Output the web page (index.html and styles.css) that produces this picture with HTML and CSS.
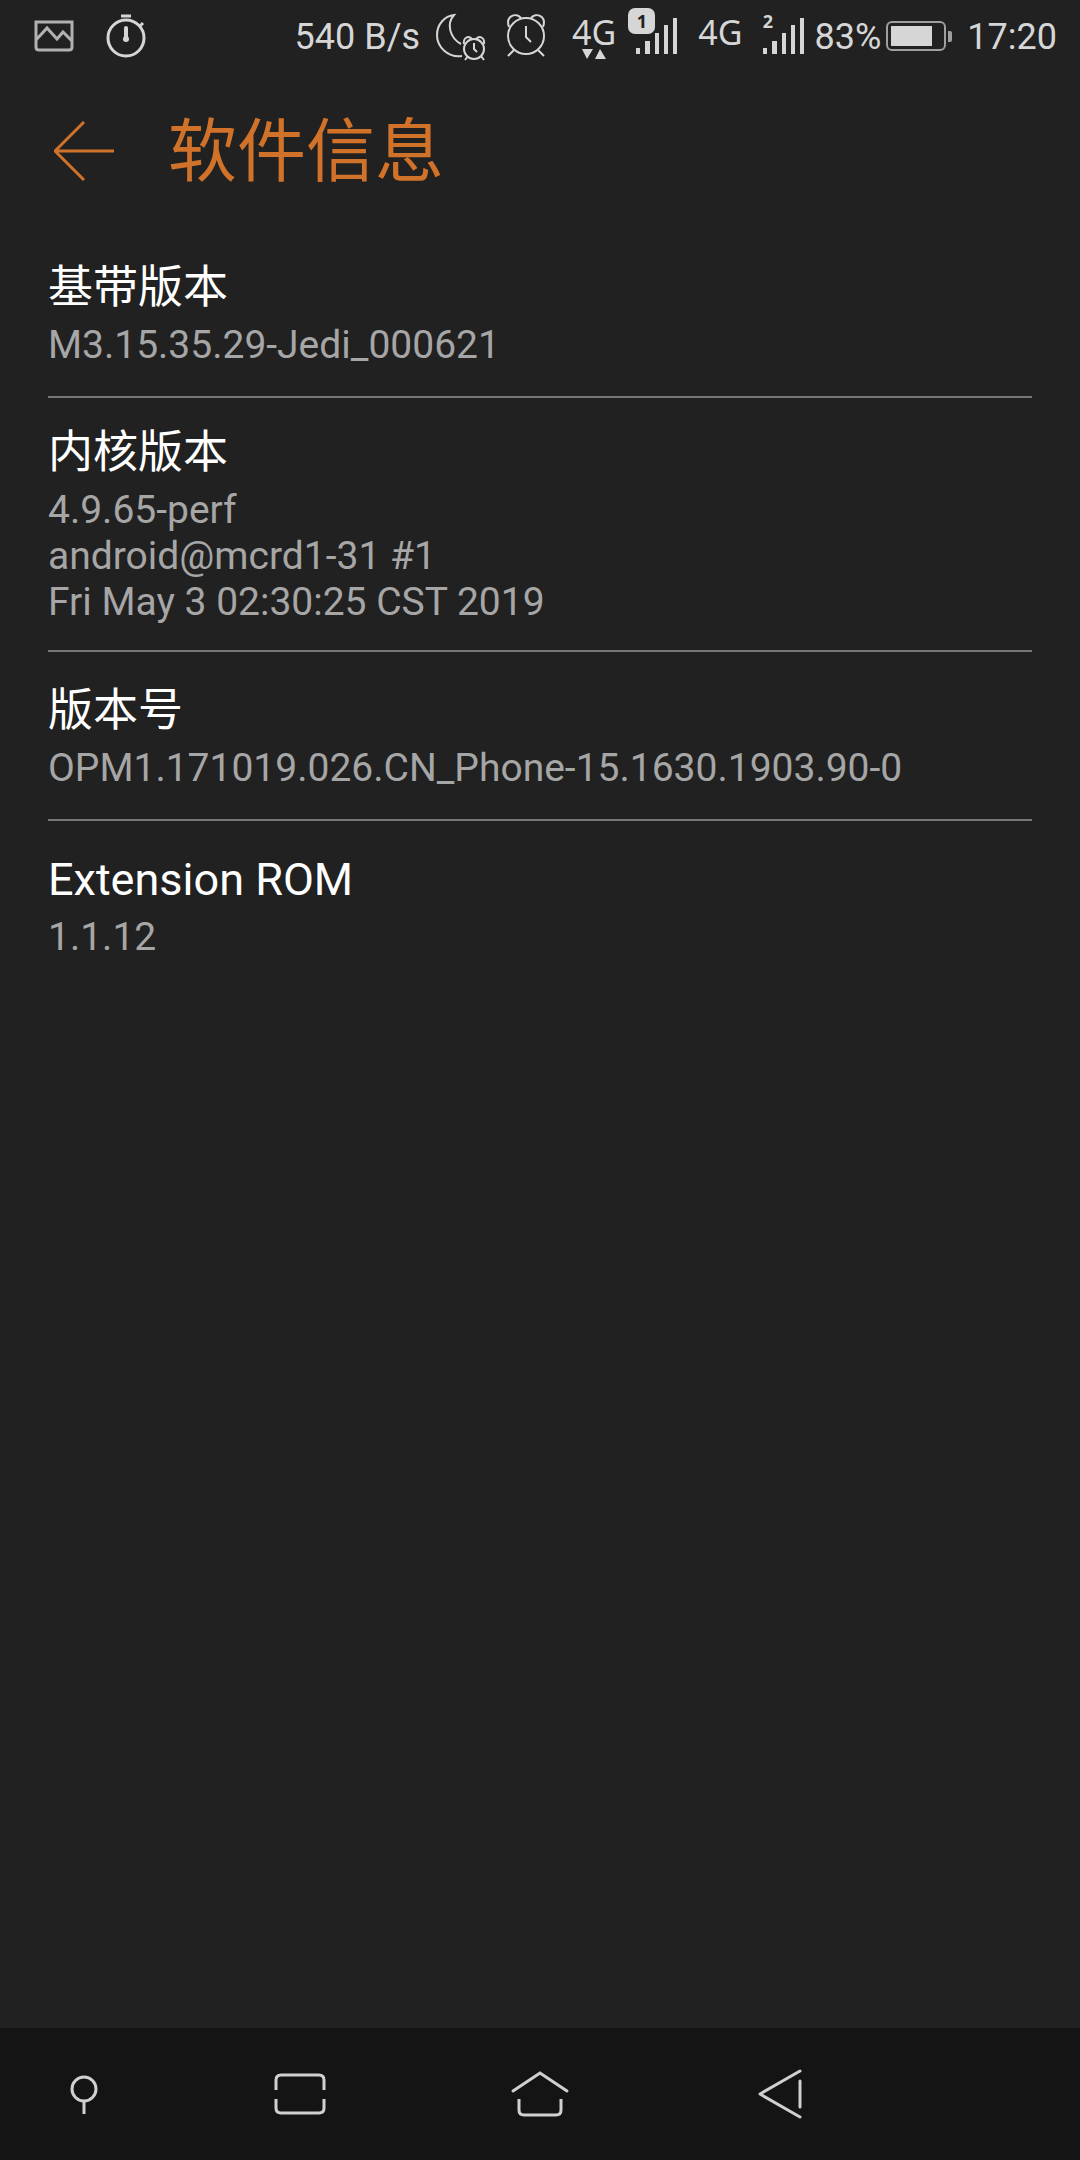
FILE: index.html
```html
<!DOCTYPE html>
<html lang="zh-CN">
<head>
    <meta charset="UTF-8">
    <meta name="viewport" content="width=device-width, initial-scale=1.0">
    <title>软件信息</title>
    <link rel="stylesheet" href="styles.css">
</head>
<body>
    <div class="status-bar">
        <svg class="icon" width="40" height="72" viewBox="34 0 40 72">
            <path d="M36 22h36v25q0 3-3 3H39q-3 0-3-3zM36 40l11-12 10 11 6-7 9 9" stroke-width="3" opacity="0.8"/>
        </svg>
        <svg class="icon stopwatch" width="40" height="72" viewBox="106 0 40 72">
            <circle cx="126" cy="38" r="18" stroke-width="3"/>
            <path d="M121 16h10M140 26l3-3" stroke-width="3"/>
            <path d="M126 28v10" stroke-width="4" stroke-linecap="round"/>
            <circle class="solid" cx="126" cy="39" r="3"/>
        </svg>

        <span class="speed">540 B/s</span>
        <svg class="icon moon" width="50" height="72" viewBox="437 0 50 72">
            <path d="M463 56C449 58 438 47 438 35C438 24 446 16 455 15C447 24 451 38 462 44"/>
            <circle cx="475" cy="49" r="10"/>
            <path d="M475 43v6l3 3M466 60l3-4M485 60l-3-4"/>
            <path d="M465 44C464 38 469 35 473 39M485 44C486 38 481 35 477 39"/>
        </svg>
        <svg class="icon alarm" width="40" height="72" viewBox="506 0 40 72">
            <circle cx="526" cy="36" r="18"/>
            <path d="M526 26v11l5 5M508 56l6-6M544 56l-6-6"/>
            <path d="M509 27C505 16 516 12 521 18M543 27C547 16 536 12 531 18"/>
        </svg>

        <div class="network">
            <span>4G</span>
            <svg class="traffic" width="24" height="10" viewBox="0 0 24 10">
                <path class="solid" d="M0 0h11L5 10zM13 10h11L18 0z"/>
            </svg>
        </div>
        <div class="signal">
            <span class="sim sim-active">1</span>
            <svg width="42" height="36" viewBox="0 0 42 36">
                <path class="solid" d="M0 30h4v6H0zM9 23h5v13H9zM19 15h4v21h-4zM28 7h4v29h-4zM37 0h4v36h-4z"/>
            </svg>
        </div>
        <div class="network">
            <span>4G</span>
        </div>
        <div class="signal">
            <span class="sim">2</span>
            <svg width="42" height="36" viewBox="0 0 42 36">
                <path class="solid" d="M0 30h4v6H0zM9 23h5v13H9zM19 15h4v21h-4zM28 7h4v29h-4zM37 0h4v36h-4z"/>
            </svg>
        </div>

        <span class="percent">83%</span>
        <svg class="icon battery" width="68" height="72" viewBox="886 0 68 72">
            <rect x="888" y="22" width="58" height="28" rx="5" opacity="0.7"/>
            <path class="solid" d="M892 26h41v20h-41z"/>
            <path class="solid" d="M949 31h2q2 0 2 2v7q0 2-2 2h-2z" opacity="0.7"/>
        </svg>
        <span class="clock">17:20</span>
    </div>

    <header class="header">
        <button class="back" type="button" aria-label="返回">
            <svg width="60" height="60" viewBox="0 0 60 60">
                <path d="M30 1L1 30l29 29M1 30h59"/>
            </svg>
        </button>
        <h1>软件信息</h1>
    </header>

    <main>
        <dl class="info-list">
            <div class="info-item">
                <dt>基带版本</dt>
                <dd>M3.15.35.29-Jedi_000621</dd>
            </div>
            <div class="info-item">
                <dt>内核版本</dt>
                <dd>4.9.65-perf<br>android@mcrd1-31 #1<br>Fri May 3 02:30:25 CST 2019</dd>
            </div>
            <div class="info-item">
                <dt>版本号</dt>
                <dd>OPM1.171019.026.CN_Phone-15.1630.1903.90-0</dd>
            </div>
            <div class="info-item">
                <dt>Extension ROM</dt>
                <dd>1.1.12</dd>
            </div>
        </dl>
    </main>

    <nav class="nav-bar">
        <button class="nav-small" type="button" aria-label="更多">
            <svg width="60" height="60" viewBox="0 0 60 60">
                <circle cx="30" cy="22" r="12"/>
                <path d="M30 34v13"/>
            </svg>
        </button>
        <button type="button" aria-label="最近任务">
            <svg width="60" height="60" viewBox="0 0 60 60">
                <path d="M6 23V13q0-5 5-5h38q5 0 5 5v10M6 32v9q0 5 5 5h38q5 0 5-5v-9"/>
            </svg>
        </button>
        <button type="button" aria-label="主屏幕">
            <svg width="60" height="60" viewBox="0 0 60 60">
                <path d="M3 24L30 6l27 18" stroke-linecap="round"/>
                <path d="M9 32v11q0 5 5 5h32q5 0 5-5V32"/>
            </svg>
        </button>
        <button type="button" aria-label="返回">
            <svg width="60" height="60" viewBox="0 0 60 60">
                <path d="M50 4L10 27l40 23M50 14v26" stroke-linecap="round" stroke-linejoin="round"/>
            </svg>
        </button>
    </nav>
</body>
</html>
```
FILE: styles.css
```css
* {
    margin: 0;
    padding: 0;
    box-sizing: border-box;
}

body {
    font-family: Roboto, "Noto Sans CJK SC", sans-serif;
    background: #212121;
    color: #fff;
    min-height: 100vh;
    display: flex;
    flex-direction: column;
}

svg {
    display: block;
    flex-shrink: 0;
    fill: none;
}

button {
    background: none;
    border: none;
    cursor: pointer;
}

/* Status bar */
.status-bar {
    display: flex;
    align-items: center;
    height: 72px;
    padding: 0 23px 0 34px;
    font-size: 36px;
    line-height: 72px;
    color: #d6d6d6;
    white-space: nowrap;
}

.icon {
    stroke: #d6d6d6;
    stroke-width: 2;
}

.solid {
    fill: #d6d6d6;
    stroke: none;
}

.stopwatch {
    margin-left: 32px;
}

.speed {
    margin-left: auto;
}

.speed,
.percent,
.clock {
    padding-top: 2px;
}

.moon {
    margin-left: 16px;
}

.alarm {
    margin-left: 20px;
}

.network {
    position: relative;
    margin-left: 20px;
    font-family: "Noto Sans", sans-serif;
    font-size: 34px;
    line-height: 64px;
    height: 72px;
}

.alarm + .network {
    margin-left: 26px;
}

.traffic {
    position: absolute;
    left: 10px;
    top: 49px;
}

.signal {
    position: relative;
    margin-left: 20px;
}

.sim {
    position: absolute;
    left: -8px;
    top: -10px;
    width: 27px;
    height: 26px;
    border-radius: 7px;
    font-family: "Noto Sans", sans-serif;
    font-size: 18px;
    font-weight: bold;
    line-height: 26px;
    text-align: center;
}

.sim-active {
    background: #d6d6d6;
    color: #212121;
}

.percent {
    margin-left: 10px;
}

.battery {
    margin-left: 4px;
}

.clock {
    margin-left: 14px;
}

/* Header */
.header {
    display: flex;
    align-items: center;
    gap: 54px;
    height: 157px;
    padding: 0 54px;
}

.back svg {
    stroke: #d0722a;
    stroke-width: 3;
}

h1 {
    padding-top: 4px;
    font-size: 69px;
    font-weight: normal;
    line-height: 80px;
    color: #d0722a;
}

/* Software info */
main {
    flex: 1;
    padding: 0 48px;
}

.info-item {
    display: flex;
    flex-direction: column;
    justify-content: center;
    min-height: 169px;
    padding: 29px 0 25px;
    border-bottom: 2px solid #777;
}

.info-item:last-child {
    border-bottom-color: transparent;
}

dt {
    font-size: 45px;
    line-height: 52px;
    margin-bottom: 8px;
}

dd {
    font-size: 39px;
    line-height: 46px;
    color: #a6a6a6;
}

/* Navigation bar */
.nav-bar {
    display: grid;
    grid-template-columns: 3fr 4fr 4fr 4fr;
    height: 132px;
    padding: 6px 180px 0 0;
    background: #141414;
}

.nav-bar button {
    display: flex;
    align-items: center;
    justify-content: center;
}

.nav-bar .nav-small {
    padding-right: 12px;
}

.nav-bar svg {
    stroke: #d0d0d0;
    stroke-width: 3;
}
```
